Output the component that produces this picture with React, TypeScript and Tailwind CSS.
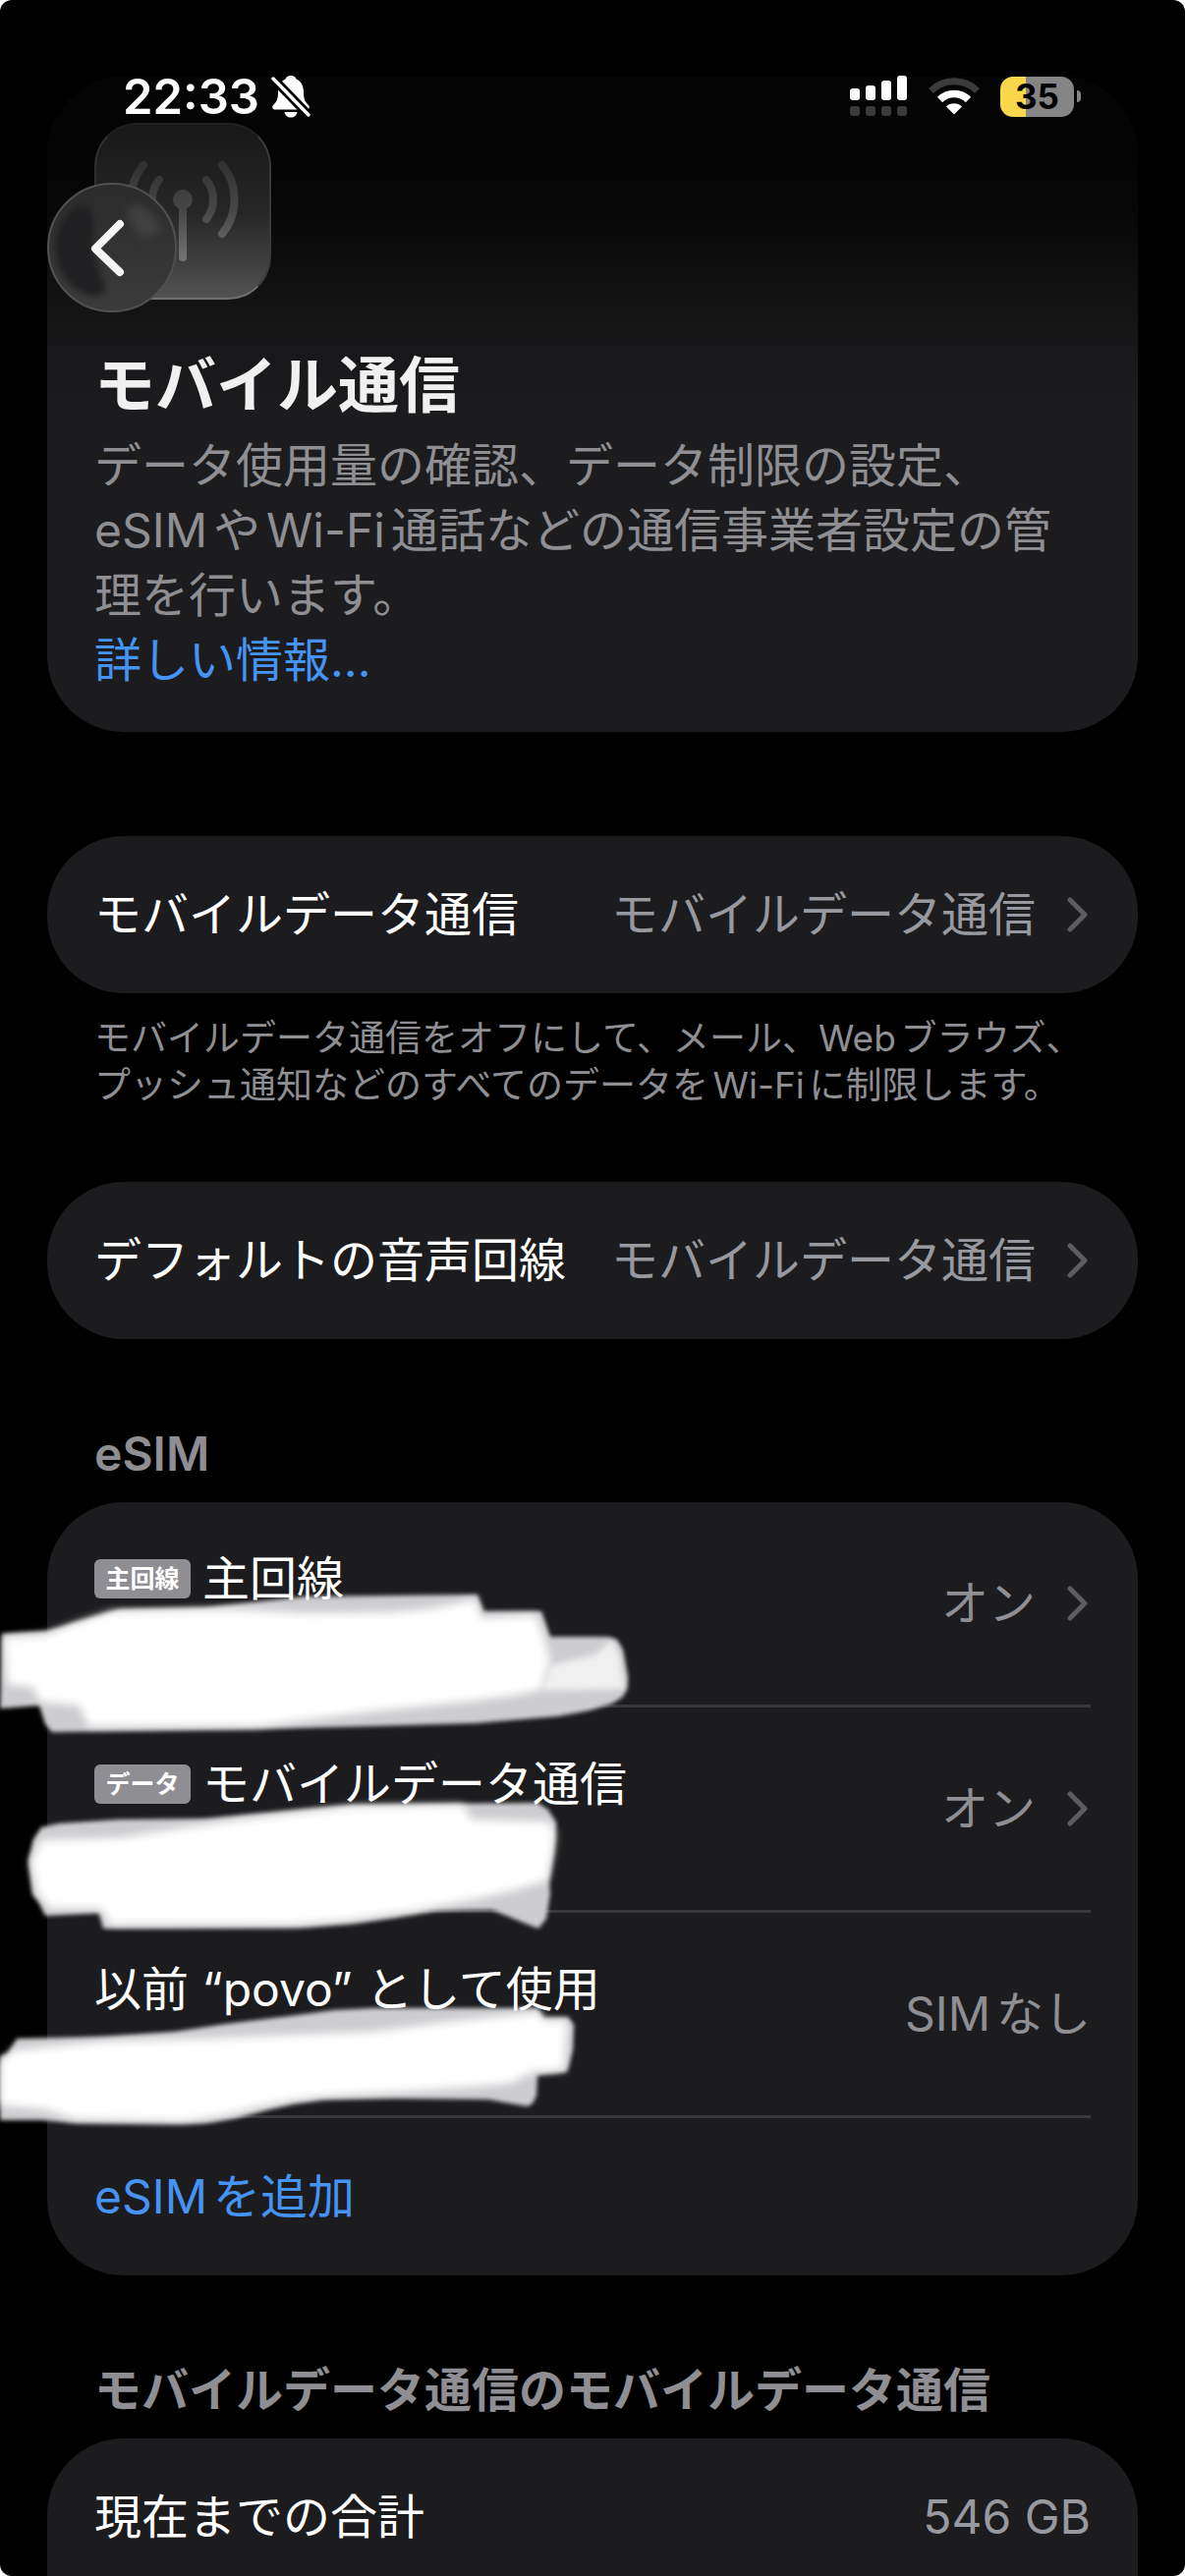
import type { ReactNode } from "react";

type Line = {
  badge?: string;
  name: string;
  status: string;
  hasDetail: boolean;
  haze: string;
  ink: string;
  tail?: string;
};

const lines: Line[] = [
  {
    badge: "主回線",
    name: "主回線",
    status: "オン",
    hasDetail: true,
    haze: "2,134 48,131 99,116 122,109 210,107 311,96 486,94 492,111 551,111 560,137 618,137 628,140 634,150 639,178 638,190 634,198 623,205 600,212 568,218 484,225 379,228 261,231 53,234 46,226 40,207 0,210",
    ink: "4,138 46,135 80,122 114,111 236,109 311,113 396,112 440,108 484,99 490,118 545,115 551,130 560,160 551,191 520,197 484,202 379,213 261,228 90,228 80,207 40,203 34,188 8,186",
    tail: "560,166 606,155 623,140 630,156 636,190 552,192",
  },
  {
    badge: "データ",
    name: "モバイルデータ通信",
    status: "オン",
    hasDetail: true,
    haze: "42,122 60,118 122,114 210,113 295,105 358,99 547,97 558,104 566,117 564,146 559,177 560,190 556,215 548,225 540,222 501,206 442,207 400,214 358,220 307,224 105,225 101,209 46,212 40,199 33,190 29,156 34,134",
    ink: "42,135 126,132 189,122 270,111 358,101 471,99 480,114 558,116 565,128 562,150 557,176 520,187 484,195 420,207 358,216 295,221 112,221 103,205 50,204 38,188 31,157",
  },
  {
    name: "以前 “povo” として使用",
    status: "SIMなし",
    hasDetail: false,
    haze: "17,128 105,126 177,121 230,113 295,105 340,99 379,97 547,97 553,107 578,106 584,114 583,140 577,162 547,165 546,186 542,194 537,197 497,190 400,189 328,190 300,194 274,200 240,209 210,214 180,215 76,214 42,211 0,211 0,146 8,143",
    ink: "13,140 105,131 210,128 300,124 379,121 463,110 551,101 552,109 577,110 574,160 543,162 518,174 430,181 337,186 295,191 261,198 225,207 189,212 76,210 46,200 0,196 0,153",
  },
];

const Chevron = () => (
  <svg viewBox="0 0 24 36" className="ml-8 h-9 w-6 shrink-0" fill="none">
    <path
      d="M3 3 L18 18 L3 33"
      stroke="#5c5c61"
      strokeWidth="5"
      strokeLinecap="round"
      strokeLinejoin="round"
    />
  </svg>
);

// white marker strokes that hide the phone number of a line
const Marker = ({ line }: { line: Line }) => (
  <svg
    viewBox="0 0 700 240"
    className="pointer-events-none absolute top-0 -left-12 z-10 h-[240px] w-[700px] overflow-visible"
    aria-hidden="true"
  >
    <polygon points={line.haze} fill="#cdcdd0" className="blur-[2px]" />
    {line.tail && (
      <polygon points={line.tail} fill="#f0f0f1" className="blur-[3px]" />
    )}
    <polygon points={line.ink} fill="#fefefe" className="blur-[4px]" />
  </svg>
);

const StatusBar = () => (
  <div className="absolute inset-x-0 top-0 z-20 flex h-[196px] items-center justify-between pr-[106px] pl-[125px]">
    <div className="flex items-center gap-3">
      <span className="text-[49px] leading-none font-semibold">22:33</span>
      <svg viewBox="0 0 40 44" className="h-11 w-10" fill="#fff">
        <path d="M20 1 C23.500 1 25 3 25.500 4.500 C31 7 33 12 33 18 C33 26 35 28 38 31 C39.500 33 39 35.500 36 35.500 H4 C1 35.500 0.500 33 2 31 C5 28 7 26 7 18 C7 12 9 7 14.500 4.500 C15 3 16.500 1 20 1 Z" />
        <path d="M13.500 38 H26.500 C26 41.500 23.500 43.500 20 43.500 C16.500 43.500 14 41.500 13.500 38 Z" />
        <path d="M2 4 L38 41" stroke="#000" strokeWidth="9" />
        <path d="M2 4 L38 41" stroke="#fff" strokeWidth="3.500" strokeLinecap="round" />
      </svg>
    </div>
    <div className="flex items-center">
      <svg viewBox="0 0 58 42" className="h-[42px] w-[58px]" fill="#fff">
        <rect x="0" y="13" width="10" height="12" rx="3" />
        <rect x="16" y="10" width="10" height="15" rx="3" />
        <rect x="32" y="5" width="10" height="20" rx="3" />
        <rect x="48" y="0" width="10" height="25" rx="3" />
        <g fill="#3b3b3b">
          <rect x="0" y="31" width="10" height="10" rx="3" />
          <rect x="16" y="31" width="10" height="10" rx="3" />
          <rect x="32" y="31" width="10" height="10" rx="3" />
          <rect x="48" y="31" width="10" height="10" rx="3" />
        </g>
      </svg>
      <svg viewBox="0 0 52 38" className="ml-[22px] h-[38px] w-[52px]" fill="none">
        <path d="M2.500 13.500 A33.500 33.500 0 0 1 49.500 13.500" stroke="#3b3b3b" strokeWidth="7" />
        <path d="M11.500 22.500 A20.500 20.500 0 0 1 40.500 22.500" stroke="#fff" strokeWidth="7.500" />
        <path d="M26 37.500 L18 29.500 A11.500 11.500 0 0 1 34 29.500 Z" fill="#fff" />
      </svg>
      <div className="ml-[21px] flex h-[41px] w-[75px] items-center justify-center rounded-[13px] bg-[linear-gradient(to_right,#f8d84a_35%,#858585_35%)] text-[35px] leading-none font-bold text-black">
        35
      </div>
      <div className="ml-[3px] h-3 w-1 rounded-r-full bg-[#858585]" />
    </div>
  </div>
);

const BackButton = () => (
  <button
    aria-label="戻る"
    className="absolute top-[186px] left-12 z-20 h-[132px] w-[132px] overflow-hidden rounded-full border-2 border-[#505050] bg-linear-to-b from-[#2b2b2c] to-[#3b3b3b]"
  >
    <svg viewBox="2 2 128 128" className="h-full w-full" fill="none">
      <path
        d="M30 24 C44 22 47 28 47 48 C46 76 50 84 58 103 C62 117 44 118 30 108 C2 88 0 44 30 24 Z"
        fill="#202022"
        className="blur-[3px]"
      />
      <path
        d="M84 24 C98 20 112 34 116 50 C110 50 104 58 98 56 C88 48 80 34 84 24 Z"
        fill="#414141"
        className="blur-[4px]"
      />
      <path
        d="M74 42 L49 67 L74 91"
        stroke="#f5f5f5"
        strokeWidth="8"
        strokeLinecap="round"
        strokeLinejoin="round"
      />
    </svg>
  </button>
);

const AntennaIcon = () => (
  <div className="h-[180px] w-[180px] rounded-[44px] border-2 border-t-[#202020] border-r-[#3a3a3a] border-b-[#707070] border-l-[#303030] bg-linear-to-b from-[#181818] via-[#262626] to-[#525252]">
    <svg viewBox="2 2 176 176" className="h-full w-full">
      <defs>
        <linearGradient id="mast" gradientUnits="userSpaceOnUse" x1="0" y1="40" x2="0" y2="142">
          <stop offset="0" stopColor="#303030" />
          <stop offset="0.500" stopColor="#484848" />
          <stop offset="1" stopColor="#767676" />
        </linearGradient>
      </defs>
      <circle cx="90" cy="78" r="10" fill="url(#mast)" />
      <rect x="86" y="82" width="8" height="59" rx="4" fill="url(#mast)" />
      <g fill="none" stroke="url(#mast)" strokeWidth="8" strokeLinecap="round">
        <path d="M114 58 A32 32 0 0 1 114 98" />
        <path d="M130 43 A55 55 0 0 1 130 113" />
        <path d="M66 58 A32 32 0 0 0 66 98" />
        <path d="M50 43 A55 55 0 0 0 50 113" />
      </g>
    </svg>
  </div>
);

const SelectRow = ({ label, value }: { label: string; value: string }) => (
  <button className="flex min-h-[160px] w-full items-center justify-between rounded-[78px] bg-[#1c1c1e] px-12 text-left">
    <span>{label}</span>
    <span className="flex items-center text-[#98989f]">
      {value}
      <Chevron />
    </span>
  </button>
);

const SectionTitle = ({ children }: { children: ReactNode }) => (
  <h2 className="mt-[84px] mb-4 px-12 font-semibold text-[#8e8e93]">
    {children}
  </h2>
);

const LineRow = ({ line }: { line: Line }) => (
  <li className="relative px-12">
    <Marker line={line} />
    <button className="flex min-h-[209px] w-full items-center justify-between border-b-3 border-[#38383a] text-left">
      <span className="relative z-20 flex flex-col">
        <span className="flex h-[60px] items-center gap-3">
          {line.badge && (
            <span className="flex h-10 w-[98px] items-center justify-center rounded-md bg-[#8e8e93] text-[25px] leading-none font-semibold">
              {line.badge}
            </span>
          )}
          {line.name}
        </span>
        <span className="h-[50px]" />
      </span>
      <span className="flex items-center text-[#8e8e93]">
        {line.status}
        {line.hasDetail && <Chevron />}
      </span>
    </button>
  </li>
);

const App = () => {
  return (
    <div className="h-screen bg-white">
      <div
        lang="ja"
        className="relative flex h-full flex-col overflow-hidden rounded-xl bg-black px-12 pt-[78px] font-['Inter','Noto_Sans_CJK_JP',sans-serif] text-[48px] leading-[66px] text-white [text-autospace:normal]"
      >
        <StatusBar />
        <BackButton />

        <header className="shrink-0 rounded-[78px] bg-[linear-gradient(to_bottom,#040404_0px,#040405_80px,#070708_130px,#0c0c0d_175px,#121213_225px,#18181a_280px,#1c1c1e_340px)] px-12 pt-[47px] pb-10">
          <AntennaIcon />
          <h1 className="mt-12 mb-2 text-[62px] leading-[80px] font-bold text-[#f0f0f0]">
            モバイル通信
          </h1>
          <p className="text-[#8e8e93]">
            データ使用量の確認、データ制限の設定、
            <br />
            eSIMやWi-Fi通話などの通信事業者設定の管
            <br />
            理を行います。
          </p>
          <a href="#details" className="block text-[#4593f2]">
            詳しい情報...
          </a>
        </header>

        <main className="flex flex-1 flex-col pt-[106px]">
          <SelectRow label="モバイルデータ通信" value="モバイルデータ通信" />
          <p className="mt-[22px] mb-[74px] px-12 text-[37px] leading-[48px] whitespace-nowrap text-[#8e8e93]">
            モバイルデータ通信をオフにして、メール、Webブラウズ、
            <br />
            プッシュ通知などのすべてのデータをWi-Fiに制限します。
          </p>
          <SelectRow label="デフォルトの音声回線" value="モバイルデータ通信" />

          <SectionTitle>eSIM</SectionTitle>
          <ul className="rounded-[78px] bg-[#1c1c1e]">
            {lines.map((line) => (
              <LineRow key={line.name} line={line} />
            ))}
            <li className="px-12">
              <button className="min-h-[160px] w-full text-left text-[#4593f2]">
                eSIMを追加
              </button>
            </li>
          </ul>

          <SectionTitle>モバイルデータ通信のモバイルデータ通信</SectionTitle>
          <div className="flex-1 rounded-t-[78px] bg-[#1c1c1e] px-12">
            <div className="flex h-[160px] items-center justify-between">
              <span>現在までの合計</span>
              <span className="text-[#98989f]">546 GB</span>
            </div>
          </div>
        </main>
      </div>
    </div>
  );
};

export default App;
